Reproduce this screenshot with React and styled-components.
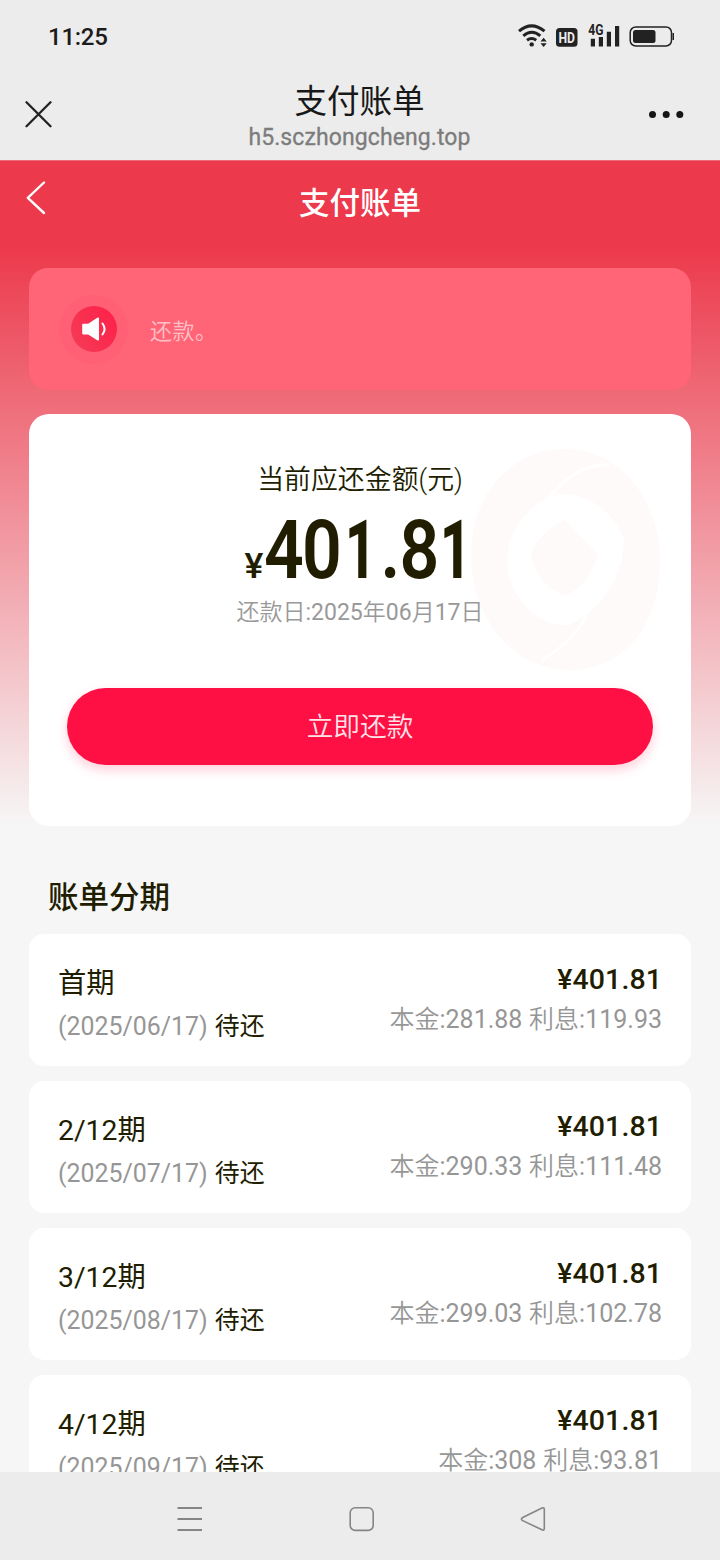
import React from 'react'
import styled, { createGlobalStyle } from 'styled-components'

const GlobalStyle = createGlobalStyle`
    * {
        box-sizing : border-box;
    }
    body {
        margin : 0;
        font-family : Roboto, 'Noto Sans CJK SC', sans-serif;
        color : #211d00;
    }
`

const Screen = styled.div`
    width : 720px;
    height : 1560px;
    display : flex;
    flex-direction : column;
    overflow : hidden;
    background-color : #ececec;
`

const StatusBar = styled.div`
    height : 74px;
    padding : 0 45px 0 48px;
    display : flex;
    align-items : center;
    justify-content : space-between;
    flex-shrink : 0;
    .clock {
        font-size : 24px;
        line-height : 30px;
        font-weight : 500;
        letter-spacing : -0.25px;
        color : #1c1c1c;
    }
`

const BrowserBar = styled.div`
    height : 86px;
    padding : 0 36px 0 25px;
    display : grid;
    grid-template-columns : 36px 1fr 36px;
    flex-shrink : 0;
    svg {
        margin-top : 26px;
    }
`

const PageInfo = styled.div`
    display : flex;
    flex-direction : column;
    align-items : center;
    padding-top : 5px;
    padding-left : 10px;
    .name {
        height : 46px;
        line-height : 46px;
        font-size : 32.5px;
        color : #181818;
    }
    .host {
        height : 26px;
        line-height : 26px;
        font-size : 23px;
        letter-spacing : 0.1px;
        color : #7c7c7c;
        -webkit-text-stroke : 0.3px #7c7c7c;
    }
`

const Content = styled.div`
    height : 1312px;
    padding : 0 29px;
    overflow : hidden;
    flex-shrink : 0;
    border-top : 1px solid #ee6a76;
    background : linear-gradient(#ec394b 0, #ec394b 84px, #f6f6f6 664px);
`

const Header = styled.div`
    height : 107px;
    display : grid;
    grid-template-columns : 60px 1fr 60px;
    svg {
        margin : 20px 0 0 -3px;
    }
    h1 {
        margin : 0;
        height : 84px;
        line-height : 86px;
        font-size : 30.5px;
        font-weight : 500;
        text-align : center;
        color : #fff;
    }
`

const Notice = styled.div`
    height : 122px;
    border-radius : 19px;
    display : flex;
    align-items : center;
    gap : 22px;
    padding-left : 30px;
    background-color : #ff6576;
    span {
        font-size : 22px;
        font-weight : 350;
        letter-spacing : 0.5px;
        margin-top : -1px;
        color : rgba(255, 255, 255, 0.6);
    }
`

const Halo = styled.div`
    width : 69px;
    height : 69px;
    border-radius : 50%;
    display : flex;
    align-items : center;
    justify-content : center;
    background-color : #ff6076;
`

const Speaker = styled.div`
    width : 46px;
    height : 46px;
    border-radius : 50%;
    display : flex;
    align-items : center;
    justify-content : center;
    background : linear-gradient(60deg, #f43d57, #ff1f48);
`

const DueCard = styled.section`
    position : relative;
    height : 412px;
    margin-top : 24px;
    padding : 46px 38px 0;
    border-radius : 20px;
    display : flex;
    flex-direction : column;
    align-items : center;
    background-color : #fff;
`

const Watermark = styled.svg`
    position : absolute;
    top : 33px;
    right : 29px;
`

const Caption = styled.div`
    height : 40px;
    line-height : 40px;
    font-size : 26.9px;
    font-weight : 350;
    position : relative;
`

const Amount = styled.div`
    position : relative;
    height : 94px;
    display : flex;
    align-items : baseline;
    line-height : 102px;
    margin-right : 2px;
    .sign {
        width : 20px;
        font-size : 35.5px;
        font-weight : 500;
    }
`

const Digit = styled.span`
    width : ${props => props.$w}px;
    margin-left : ${props => props.$gap || 0}px;
    display : flex;
    justify-content : center;
    font-size : 81px;
    font-weight : ${props => props.$narrow ? 800 : 600};
    transform : scaleX(${props => props.$narrow ? 0.66 : 0.86});
`

const DueDate = styled.div`
    position : relative;
    height : 36px;
    line-height : 38px;
    font-size : 23px;
    color : #999;
`

const Thin = styled.span`
    font-weight : 350;
`

const PayButton = styled.button`
    width : 586px;
    height : 77px;
    margin-top : 58px;
    padding : 0 0 4px;
    border : 0;
    border-radius : 39px;
    background-color : #ff1044;
    box-shadow : 0 5px 12px rgba(255, 16, 68, 0.2);
    color : rgba(255, 255, 255, 0.9);
    font-family : inherit;
    font-size : 26.7px;
    font-weight : 350;
    cursor : pointer;
`

const SectionTitle = styled.h2`
    height : 108px;
    margin : 0;
    padding : 36px 0 0 19px;
    line-height : 72px;
    font-size : 30.5px;
    font-weight : 500;
`

const PlanList = styled.div`
    display : flex;
    flex-direction : column;
    gap : 15px;
`

const PlanRow = styled.div`
    height : 132px;
    flex-shrink : 0;
    padding : 0 29px;
    border-radius : 15px;
    display : flex;
    justify-content : space-between;
    background-color : #fff;
`

const Left = styled.div`
    padding-top : 29px;
    .term {
        height : 42px;
        line-height : 42px;
        font-size : 28.3px;
    }
    .date {
        height : 44px;
        line-height : 44px;
        font-size : 24.9px;
        color : #969696;
    }
    em {
        font-style : normal;
        color : #211d00;
        margin-left : 1px;
    }
`

const Right = styled.div`
    padding-top : 25px;
    text-align : right;
    .total {
        height : 40px;
        line-height : 42px;
        font-size : 28.5px;
        font-weight : 500;
        letter-spacing : 0.1px;
    }
    .detail {
        height : 40px;
        line-height : 41px;
        font-size : 25px;
        word-spacing : 0.5px;
        color : #969696;
    }
`

const NavBar = styled.div`
    height : 88px;
    padding : 6px 171px 0 173px;
    display : flex;
    align-items : center;
    justify-content : space-between;
    flex-shrink : 0;
`

// display numerals are spaced optically, the point sits wide
const amount = [
    { char : '4', w : 38 },
    { char : '0', w : 38 },
    { char : '1', w : 29, gap : 5 },
    { char : '.', w : 29, gap : 1 },
    { char : '8', w : 29 },
    { char : '1', w : 37, gap : 3 },
]

const plans = [
    { term : '首期', date : '2025/06/17', base : '281.88', interest : '119.93' },
    { term : '2/12期', date : '2025/07/17', base : '290.33', interest : '111.48' },
    { term : '3/12期', date : '2025/08/17', base : '299.03', interest : '102.78' },
    { term : '4/12期', date : '2025/09/17', base : '308', interest : '93.81' },
]

const StatusIcons = () => (
    <svg width='158' height='30' viewBox='517 22 158 30' fill='none'>
        {/* wifi */}
        <g stroke='#222' strokeWidth='3'>
            <path d='M519 31.2 Q531.5 20.5 544.5 31.2' />
            <path d='M523.3 35.8 Q531.7 28.6 540.3 35.8' />
            <path d='M527 40.3 Q531.6 36.8 536.2 40.3' />
        </g>
        <circle cx='531.7' cy='44.4' r='2.2' fill='#222' />
        <path d='M540.5 41.5 L543.6 37.8 L546.7 41.5 Z M540.5 43.2 L543.6 46.9 L546.7 43.2 Z' fill='#222' />
        {/* hd */}
        <rect x='556' y='28' width='21.5' height='18.7' rx='3.5' fill='#222' />
        <text x='558.5' y='42.6' textLength='16.5' lengthAdjust='spacingAndGlyphs' fontSize='15' fontWeight='700' fill='#ececec'>HD</text>
        {/* signal */}
        <text x='588.3' y='35' textLength='15.2' lengthAdjust='spacingAndGlyphs' fontSize='14.3' fontWeight='700' fill='#222'>4G</text>
        <path d='M590.8 38.8h4.2v7.7h-4.2z M598.8 37h4.2v9.5h-4.2z M606.8 31.8h4.2v14.7h-4.2z M615 26h4.2v20.5h-4.2z' fill='#222' />
        {/* battery */}
        <rect x='630.2' y='27' width='41.3' height='19' rx='5.5' stroke='#222' strokeWidth='1.5' />
        <rect x='633' y='30' width='22.5' height='13' rx='2.5' fill='#222' />
        <path d='M672.5 33 h1.5 v7 h-1.5 z' fill='#222' />
    </svg>
)

const App = () => (
    <>
        <GlobalStyle />
        <Screen>
            <StatusBar>
                <span className='clock'>11:25</span>
                <StatusIcons />
            </StatusBar>
            <BrowserBar>
                <svg width='28' height='28' viewBox='0 0 28 28' stroke='#222' strokeWidth='2.3' strokeLinecap='round'>
                    <path d='M1.5 2.3 L25.5 26.3 M25.5 2.3 L1.5 26.3' />
                </svg>
                <PageInfo>
                    <div className='name'>支付账单</div>
                    <div className='host'>h5.sczhongcheng.top</div>
                </PageInfo>
                <svg width='36' height='28' viewBox='0 0 36 28' fill='#161616'>
                    <circle cx='4.5' cy='14.5' r='3.5' />
                    <circle cx='18.2' cy='14.5' r='3.5' />
                    <circle cx='31.8' cy='14.5' r='3.5' />
                </svg>
            </BrowserBar>
            <Content>
                <Header>
                    <svg width='20' height='34' viewBox='0 0 20 34' fill='none' stroke='#fff' strokeWidth='2.4' strokeLinecap='round' strokeLinejoin='round'>
                        <path d='M18 1.5 L1.8 16.8 L18 32' />
                    </svg>
                    <h1>支付账单</h1>
                </Header>
                <Notice>
                    <Halo>
                        <Speaker>
                            <svg width='26' height='26' viewBox='0 0 26 26' fill='#fff'>
                                <path d='M2.2 7.8 h5 L16.2 1.8 q1.8 -1 1.8 0.6 v21.2 q0 1.6 -1.8 0.6 L7.2 18.5 h-5 q-1 0 -1 -1 v-8.7 q0 -1 1 -1 z' />
                                <path d='M21.5 7.5 q4.2 5.5 0 11' fill='none' stroke='#fff' strokeWidth='2' strokeLinecap='round' />
                            </svg>
                        </Speaker>
                    </Halo>
                    <span>还款。</span>
                </Notice>
                <DueCard>
                    <Watermark width='192' height='224' viewBox='470 447 192 224'>
                        <path d='M566 449 C620 449 660 500 660 560 C660 630 620 670 570 670 C510 670 471 615 471 555 C471 495 510 449 566 449 Z' fill='#fffafa' />
                        <path d='M624 538 C608 503 580 494 560 494 C535 497 507 530 507 560 C507 595 535 625 567 625 C590 618 624 587 624 538 Z M565 520 L598 554 Q590 585 565 596 Q535 583 531 554 Q538 533 565 520 Z' fill='#fff' fillRule='evenodd' />
                        <path d='M541 508 Q574 461 610 465 M586 616 Q575 640 542 660' stroke='#fff' strokeWidth='3' fill='none' />
                    </Watermark>
                    <Caption>当前应还金额(元)</Caption>
                    <Amount>
                        <span className='sign'>¥</span>
                        {amount.map((d, i) => (
                            <Digit key={i} $w={d.w} $gap={d.gap} $narrow={d.char === '1'}>{d.char}</Digit>
                        ))}
                    </Amount>
                    <DueDate><Thin>还款日</Thin>:2025<Thin>年</Thin>06<Thin>月</Thin>17<Thin>日</Thin></DueDate>
                    <PayButton>立即还款</PayButton>
                </DueCard>
                <SectionTitle>账单分期</SectionTitle>
                <PlanList>
                    {plans.map(p => (
                        <PlanRow key={p.term}>
                            <Left>
                                <div className='term'>{p.term}</div>
                                <div className='date'>({p.date}) <em>待还</em></div>
                            </Left>
                            <Right>
                                <div className='total'>¥401.81</div>
                                <div className='detail'>
                                    <Thin>本金</Thin>:{p.base} <Thin>利息</Thin>:{p.interest}
                                </div>
                            </Right>
                        </PlanRow>
                    ))}
                </PlanList>
            </Content>
            <NavBar>
                <svg width='32' height='32' viewBox='0 0 32 32' stroke='#858585' strokeWidth='1.8'>
                    <path d='M4.5 5 H29 M4.5 16 H29 M4.5 27 H29' />
                </svg>
                <svg width='32' height='32' viewBox='0 0 32 32' fill='none' stroke='#858585' strokeWidth='1.6'>
                    <rect x='5.2' y='4.8' width='23' height='22.6' rx='5' />
                </svg>
                <svg width='32' height='32' viewBox='0 0 32 32' fill='none' stroke='#858585' strokeWidth='1.6' strokeLinejoin='round'>
                    <path d='M5.2 14.8 L25 5 Q27.3 4.2 27.3 6.5 V25.5 Q27.3 27.8 25 26.8 L5.2 17.4 Q3.6 16.1 5.2 14.8 Z' />
                </svg>
            </NavBar>
        </Screen>
    </>
)

export default App
